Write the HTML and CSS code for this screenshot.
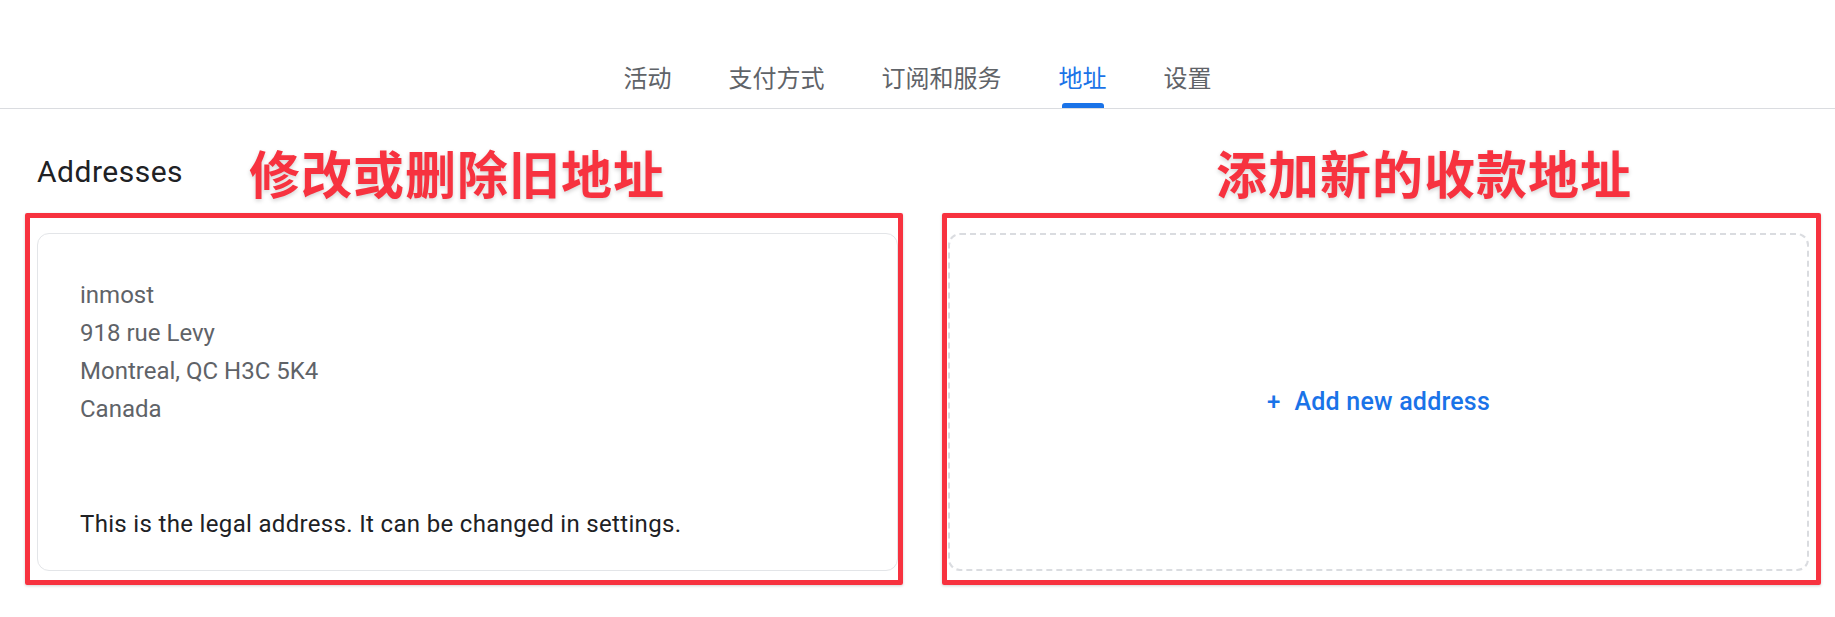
FILE: index.html
```html
<!DOCTYPE html>
<html lang="zh-CN">
<head>
<meta charset="utf-8">
<title>Addresses</title>
<link rel="stylesheet" href="styles.css">
</head>
<body>
  <nav class="tabs">
    <a class="tab">活动</a>
    <a class="tab">支付方式</a>
    <a class="tab">订阅和服务</a>
    <a class="tab active">地址</a>
    <a class="tab">设置</a>
  </nav>
  <main class="content">
    <h1 class="heading">Addresses</h1>
    <div class="grid">
      <div class="col">
        <div class="card">
          <div class="addr">
            <div>inmost</div>
            <div>918 rue Levy</div>
            <div>Montreal, QC H3C 5K4</div>
            <div>Canada</div>
          </div>
          <div class="note">This is the legal address. It can be changed in settings.</div>
        </div>
        <div class="mark mark-left"></div>
        <div class="label label-left">修改或删除旧地址</div>
      </div>
      <div class="col">
        <button class="card add-card">
          <span class="plus">+</span><span>Add new address</span>
        </button>
        <div class="mark mark-right"></div>
        <div class="label label-right">添加新的收款地址</div>
      </div>
    </div>
  </main>
</body>
</html>
```
FILE: styles.css
```css
* { box-sizing: border-box; }
html, body { margin: 0; background: #fff; }
body {
  font-family: Roboto, "Noto Sans", "Noto Sans CJK SC", sans-serif;
  color: #202124;
  width: 1835px;
  height: 617px;
  overflow: hidden;
}
.tabs {
  display: flex;
  justify-content: center;
  align-items: flex-end;
  gap: 57px;
  padding-top: 57px;
  height: 109px;
  border-bottom: 1px solid #dadce0;
}
.tab {
  display: flex;
  flex-direction: column;
  font-family: "Noto Sans CJK SC", sans-serif;
  font-size: 24px;
  line-height: 40px;
  color: #5f6368;
  cursor: pointer;
}
.tab::after {
  content: "";
  display: block;
  height: 5px;
  margin: 6px 3px 0;
  border-radius: 3px 3px 0 0;
  background: transparent;
}
.tab.active { color: #1a73e8; }
.tab.active::after { background: #1a73e8; }

.content {
  padding: 0 26px 0 37px;
}
.heading {
  margin: 44px 0 43px;
  font-size: 30px;
  line-height: 37px;
  font-weight: 400;
  letter-spacing: 0.5px;
  color: #202124;
}
.grid {
  display: grid;
  grid-template-columns: 1fr 1fr;
  gap: 50px;
}
.col { position: relative; }
.card {
  height: 338px;
  border: 1px solid #e3e5e8;
  border-radius: 12px;
  background: #fff;
  padding: 42px 42px 27px;
  display: flex;
  flex-direction: column;
  font-size: 24px;
  line-height: 38px;
}
.addr { color: #5f6368; }
.note { margin-top: auto; color: #202124; letter-spacing: 0.33px; }
.add-card {
  width: 100%;
  border: 2px dashed #dadce0;
  align-items: center;
  justify-content: center;
  flex-direction: row;
  padding: 0;
  font-family: Roboto, sans-serif;
  font-size: 25px;
  font-weight: 500;
  letter-spacing: 0.2px;
  color: #1a73e8;
  cursor: pointer;
}
.plus { margin-right: 14px; font-size: 24px; }

/* annotation overlays */
.mark {
  position: absolute;
  top: -20px;
  bottom: -14px;
  border: 5px solid #f7323f;
  border-radius: 2px;
  box-shadow: 0 1px 3px rgba(0,0,0,0.18);
  pointer-events: none;
}
.mark-left { left: -12px; right: -5px; }
.mark-right { left: -6px; right: -12px; }
.label {
  position: absolute;
  top: -86px;
  font-family: "Noto Sans CJK SC", sans-serif;
  font-weight: 700;
  font-size: 51px;
  line-height: 51px;
  letter-spacing: 1px;
  color: #f7323f;
  text-shadow: 0 2px 4px rgba(0,0,0,0.18);
  white-space: nowrap;
}
.label-left { left: 212px; }
.label-right { left: 268px; }
```
